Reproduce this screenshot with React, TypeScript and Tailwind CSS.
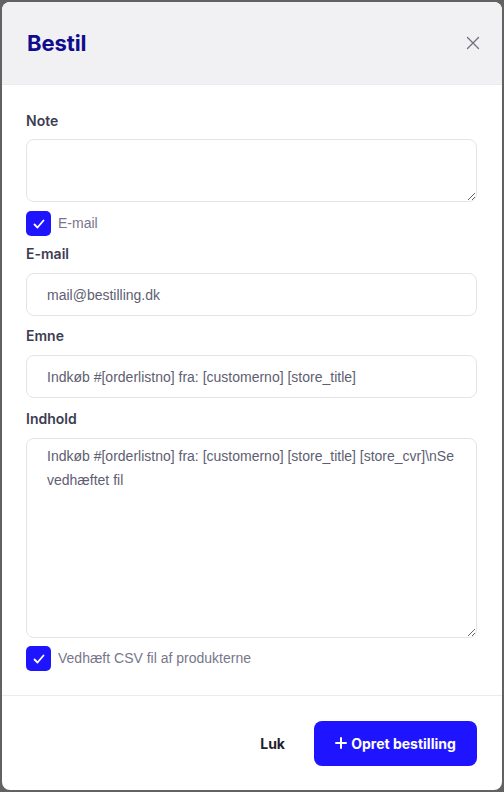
const Check = () => (
  <span className="flex h-[25px] w-[25px] items-center justify-center rounded-[5px] bg-[#1f14ff]">
    <svg width="14" height="14" viewBox="0 0 14 14" fill="none">
      <path d="M2.5 7.5l3 3 6-7" stroke="white" strokeWidth="1.8" strokeLinecap="round" strokeLinejoin="round" />
    </svg>
  </span>
);

const Label = ({ children }: { children: React.ReactNode }) => (
  <label className="block text-[14px] leading-5 font-semibold text-[#3d3d52] font-['Inter',sans-serif]">
    {children}
  </label>
);

const fieldCls =
  "w-full rounded-lg border border-[#e3e3ea] bg-white px-5 text-[14px] text-[#5e5e72] font-['Liberation_Sans',Arial,sans-serif] outline-none";

export default function App() {
  return (
    <div className="h-[792px] w-[504px] bg-[#626262] p-[2px]">
      <div className="flex h-full flex-col overflow-hidden rounded-lg bg-white">
        <div className="flex h-[83px] shrink-0 items-center justify-between bg-[#f1f1f4] pl-[25px] pr-[22px] border-b border-[#ebebef]">
          <h1 className="text-[22px] font-bold text-[#100c8e] font-['Inter',sans-serif] tracking-[-0.1px]">Bestil</h1>
          <svg width="14" height="14" viewBox="0 0 14 14" fill="none">
            <path d="M1.5 1.5l11 11M12.5 1.5l-11 11" stroke="#6f6f7d" strokeWidth="1.3" strokeLinecap="round" />
          </svg>
        </div>

        <div className="flex flex-1 flex-col pl-6 pr-[25px] pt-[26px]">
          <Label>Note</Label>
          <textarea className={`${fieldCls} mt-2 h-[63px] py-2 resize-y`} />
          <div className="mt-[9px] flex items-center gap-[7px]">
            <Check />
            <span className="text-[14px] text-[#77778a] font-['Liberation_Sans',Arial,sans-serif]">E-mail</span>
          </div>

          <div className="mt-[8px]">
            <Label>E-mail</Label>
          </div>
          <input className={`${fieldCls} mt-[9px] h-[43px]`} defaultValue="mail@bestilling.dk" />

          <div className="mt-[10px]">
            <Label>Emne</Label>
          </div>
          <input
            className={`${fieldCls} mt-[9px] h-[43px]`}
            defaultValue="Indkøb #[orderlistno] fra: [customerno] [store_title]"
          />

          <div className="mt-[11px]">
            <Label>Indhold</Label>
          </div>
          <textarea
            className={`${fieldCls} mt-[9px] h-[200px] pt-[5px] leading-6 resize-y`}
            defaultValue={"Indkøb #[orderlistno] fra: [customerno] [store_title] [store_cvr]\\nSe vedhæftet fil"}
          />
          <div className="mt-[8px] flex items-center gap-[7px]">
            <Check />
            <span className="text-[14px] text-[#77778a] font-['Liberation_Sans',Arial,sans-serif]">
              Vedhæft CSV fil af produkterne
            </span>
          </div>
        </div>

        <div className="flex h-[95px] shrink-0 items-center justify-end gap-[13px] border-t border-[#ebebef] pl-6 pr-[25px]">
          <button className="px-4 text-[14px] font-bold text-[#1e1e2e] font-['Inter',sans-serif]">Luk</button>
          <button className="flex h-[45px] w-[163px] items-center justify-center gap-[4px] rounded-lg bg-[#1f14ff] text-[14px] font-bold text-white font-['Inter',sans-serif]">
            <svg width="12" height="12" viewBox="0 0 12 12" fill="none">
              <path d="M6 1v10M1 6h10" stroke="white" strokeWidth="2" strokeLinecap="round" />
            </svg>
            Opret bestilling
          </button>
        </div>
      </div>
    </div>
  );
}
